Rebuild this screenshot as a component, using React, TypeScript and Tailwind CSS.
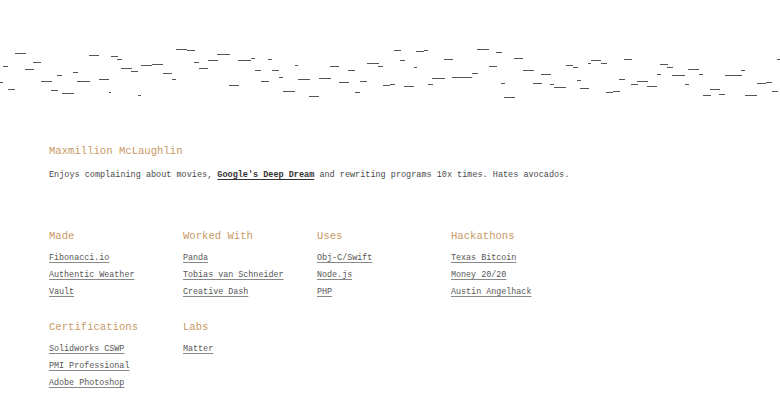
const dashes: [number, number, number][] = [
  // x1, x2, y (page coords)
  [15, 26, 53], [89, 99, 55], [111, 118, 56], [117, 122, 59], [176, 187, 49], [187, 195, 50],
  [217, 230, 54], [238, 251, 60], [251, 255, 58], [268, 272, 59], [3, 8, 66], [33, 41, 62],
  [25, 34, 69], [141, 152, 65], [152, 163, 64], [121, 132, 68], [131, 138, 71], [194, 199, 62],
  [208, 218, 60], [199, 208, 68], [255, 261, 70], [272, 279, 70], [295, 298, 65], [330, 339, 66],
  [348, 355, 70], [367, 379, 63], [378, 383, 66], [57, 62, 75], [73, 78, 72], [163, 172, 73],
  [172, 176, 79], [0, 3, 82], [41, 52, 81], [77, 90, 81], [99, 109, 79], [279, 283, 77],
  [298, 310, 79], [319, 331, 78], [339, 349, 82], [360, 367, 81], [383, 390, 85], [229, 239, 85],
  [261, 269, 81], [8, 15, 89], [51, 58, 90], [62, 74, 93], [109, 111, 92], [138, 141, 95],
  [283, 295, 91], [309, 319, 96], [355, 360, 92],
  [394, 401, 50], [416, 424, 51], [424, 428, 50], [477, 489, 49], [496, 502, 52], [400, 405, 60],
  [444, 453, 59], [514, 523, 58], [591, 601, 60], [588, 591, 63], [601, 607, 63], [624, 632, 59],
  [777, 780, 59], [414, 417, 67], [489, 497, 66], [566, 573, 65], [573, 578, 67], [660, 668, 64],
  [667, 673, 67], [688, 699, 69], [523, 534, 70], [541, 551, 74], [472, 478, 73], [452, 472, 77],
  [432, 445, 78], [657, 661, 74], [672, 685, 75], [699, 703, 74], [725, 742, 75], [741, 745, 70],
  [390, 395, 84], [404, 414, 86], [428, 433, 84], [501, 505, 83], [533, 542, 83], [550, 554, 84],
  [554, 566, 87], [577, 581, 80], [580, 589, 88], [619, 625, 79], [631, 638, 84], [637, 648, 81],
  [647, 657, 86], [606, 613, 92], [613, 620, 91], [685, 689, 84], [710, 720, 89], [703, 711, 95],
  [719, 725, 94], [745, 757, 95], [757, 766, 83], [766, 772, 82], [772, 778, 91], [504, 515, 97],
]

const sections = [
  { title: 'Made', items: ['Fibonacci.io', 'Authentic Weather', 'Vault'] },
  { title: 'Worked With', items: ['Panda', 'Tobias van Schneider', 'Creative Dash'] },
  { title: 'Uses', items: ['Obj-C/Swift', 'Node.js', 'PHP'] },
  { title: 'Hackathons', items: ['Texas Bitcoin', 'Money 20/20', 'Austin Angelhack'] },
  { title: 'Certifications', items: ['Solidworks CSWP', 'PMI Professional', 'Adobe Photoshop'] },
  { title: 'Labs', items: ['Matter'] },
]

export default function App() {
  return (
    <div className="min-h-[412px] w-[780px] bg-white pt-[45px] font-['Liberation_Mono','DejaVu_Sans_Mono',monospace]">
      {/* dash field */}
      <svg width="780" height="56" viewBox="0 45 780 56" className="block">
        {dashes.map(([x1, x2, y], i) => (
          <line key={i} x1={x1} x2={x2} y1={y + 0.5} y2={y + 0.5} stroke="#555" strokeWidth="1" />
        ))}
      </svg>

      <div className="pl-[49px]">
        {/* intro */}
        <h1 className="mt-[42px] text-[10.6px] leading-[16px] text-[#c99a66]">Maxmillion McLaughlin</h1>
        <p className="mt-[9px] text-[8.5px] leading-[14px] text-[#4a4a4a]">
          Enjoys complaining about movies,{' '}
          <a href="#" className="font-bold text-[#333] underline underline-offset-2">Google's Deep Dream</a>{' '}
          and rewriting programs 10x times. Hates avocados.
        </p>

        {/* lists */}
        <div className="mt-[46px] grid grid-cols-[repeat(4,134px)] gap-y-[18px]">
          {sections.map((s) => (
            <div key={s.title}>
              <h2 className="text-[10.6px] leading-[16px] text-[#c99a66]">{s.title}</h2>
              <ul className="mt-[6px]">
                {s.items.map((it) => (
                  <li key={it} className="text-[8.4px] leading-[17px]">
                    <a href="#" className="text-[#555] underline underline-offset-2 decoration-[#888]">{it}</a>
                  </li>
                ))}
              </ul>
            </div>
          ))}
        </div>
      </div>
    </div>
  )
}
